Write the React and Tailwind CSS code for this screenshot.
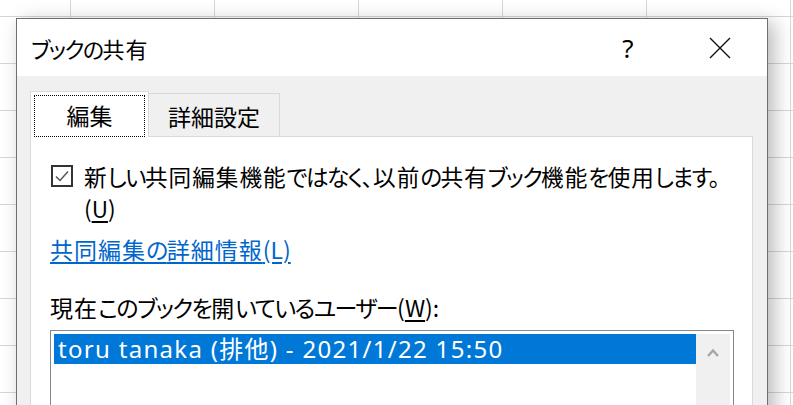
// Yu Gothic UI has wide kanji and narrow kana; nudge the spacing per run to match.
function T({ children }) {
  const parts = children.match(/[\u3400-\u9fff]+|[^\u3400-\u9fff]+/g) || [];
  return parts.map((p, i) =>
    /[\u3400-\u9fff]/.test(p) ? (
      <span key={i} className="tracking-[1px]">{p}</span>
    ) : (
      <span key={i} className="tracking-[-1.5px]">{p}</span>
    )
  );
}

export default function App() {
  return (
    <div className="relative w-[793px] h-[405px] overflow-hidden bg-white bg-[linear-gradient(to_right,#d6d6d6_1px,transparent_1px),linear-gradient(to_bottom,#d6d6d6_1px,transparent_1px)] bg-[size:144px_47px] bg-[position:70px_16px] pl-[16px] pt-[18px] font-['Noto_Sans_CJK_JP',sans-serif] [font-feature-settings:'palt'] text-black">
      {/* Dialog */}
      <div className="w-[752px] h-[420px] border border-[#6f6f6f] bg-[#f0f0f0] shadow-[6px_4px_18px_rgba(0,0,0,0.28)] flex flex-col">
        {/* Title bar */}
        <div className="h-[57px] bg-white flex items-center pl-[14px] shrink-0">
          <div className="text-[22px] leading-none flex-1"><T>ブックの共有</T></div>
          <div className="w-[40px] text-center text-[26px] leading-none font-['Noto_Sans',sans-serif] mr-[61px]">?</div>
          <svg width="22" height="22" viewBox="0 0 22 22" className="mr-[36px]">
            <path d="M1 1 L21 21 M21 1 L1 21" stroke="#111" strokeWidth="1.4" fill="none" />
          </svg>
        </div>

        {/* Body */}
        <div className="flex-1 pt-[15px] pl-[13px] pr-[14px]">
          {/* Tabs */}
          <div className="flex items-end">
            <div className="relative z-10 -mb-px w-[119px] h-[46px] bg-white border border-b-0 border-[#d9d9d9] pt-[3px] px-[3px]">
              <div className="h-full border border-dotted border-black flex items-center justify-center text-[23px] leading-none pb-[1px]">
                編集
              </div>
            </div>
            <div className="w-[131px] h-[43px] border border-l-0 border-b-0 border-[#d9d9d9] flex items-center justify-center text-[23px] leading-none pt-[2px]">
              詳細設定
            </div>
          </div>

          {/* Panel */}
          <div className="bg-white border border-[#d9d9d9] h-[300px] pl-[19px] pt-[24px] pr-[18px]">
            <div className="flex items-start">
              <div className="mt-[4px] ml-[1px] w-[22px] h-[22px] border-2 border-[#333] flex items-center justify-center shrink-0">
                <svg width="16" height="14" viewBox="0 0 16 14">
                  <path d="M2 7.5 L6 11.5 L14 2.5" stroke="#555" strokeWidth="1.5" fill="none" />
                </svg>
              </div>
              <div className="ml-[11px] text-[22.6px] leading-[32px] whitespace-nowrap">
                <T>新しい共同編集機能ではなく</T>
                <span>、</span>
                <T>以前の共有ブック機能を使用します。</T>
                <br />
                (<span className="underline underline-offset-[3px]">U</span>)
              </div>
            </div>

            <div className="mt-[8px] text-[23px] leading-[32px] text-[#0066cc] underline underline-offset-[3px] whitespace-nowrap">
              <T>共同編集の詳細情報</T>(L)
            </div>

            <div className="mt-[26px] text-[23px] leading-[32px] whitespace-nowrap">
              <T>現在このブックを開いているユーザー</T>(<span className="underline underline-offset-[3px]">W</span>):
            </div>

            <div className="mt-[7px] w-[684px] h-[120px] border border-[#828790] p-[3px] flex">
              <div className="flex-1 h-[30px] bg-[#0078d7] text-white pl-[4px] flex items-center text-[24px] tracking-[1.3px] leading-none font-['Noto_Sans','Noto_Sans_CJK_JP',sans-serif] whitespace-nowrap">
                toru tanaka (排他) - 2021/1/22 15:50
              </div>
              <div className="w-[34px] bg-[#f0f0f0] flex justify-center pt-[14px]">
                <svg width="12" height="9" viewBox="0 0 12 9">
                  <path d="M1 8 L6 2.5 L11 8" stroke="#a6a6a6" strokeWidth="2.4" fill="none" />
                </svg>
              </div>
            </div>
          </div>
        </div>
      </div>
    </div>
  );
}
